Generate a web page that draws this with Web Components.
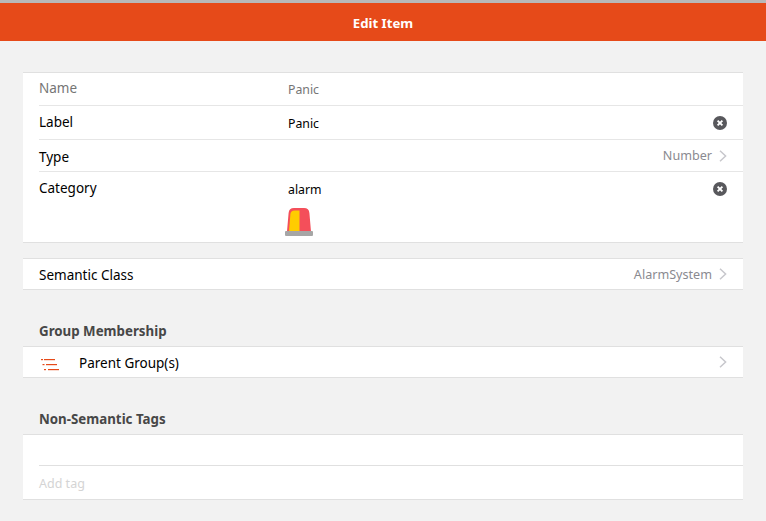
<!DOCTYPE html>
<html>
<head>
<meta charset="utf-8">
<style>
  html, body { margin: 0; padding: 0; }
  body { width: 766px; height: 521px; overflow: hidden; background: #f2f2f2; font: 13.5px "Noto Sans", sans-serif; color: #000; }
</style>
</head>
<body>
<edit-page>
  <nav-bar slot="bar">Edit Item</nav-bar>

  <list-card style="margin-top:31px">
    <list-row h="33" dim label="Name" value="Panic" inset style="--lab:-2px;--val:1px"></list-row>
    <list-row h="34" label="Label" value="Panic" clear inset style="--lab:-2px;--val:3px"></list-row>
    <list-row h="32" label="Type" after="Number" chevron inset style="--lab:2px"></list-row>
    <list-row h="70" top label="Category" value="alarm" clear style="--val:2px">
      <alarm-icon slot="extra"></alarm-icon>
    </list-row>
  </list-card>

  <list-card style="margin-top:15px">
    <list-row h="30" label="Semantic Class" after="AlarmSystem" chevron style="--lab:2px"></list-row>
  </list-card>

  <block-title style="height:56px">Group Membership</block-title>
  <list-card>
    <list-row h="30" label="Parent Group(s)" chevron style="--lab:2px">
      <list-icon slot="media"></list-icon>
    </list-row>
  </list-card>

  <block-title style="height:56px">Non-Semantic Tags</block-title>
  <list-card>
    <tag-input></tag-input>
  </list-card>
</edit-page>

<script>
class EditPage extends HTMLElement {
  constructor() {
    super();
    this.attachShadow({mode:'open'});
    this.shadowRoot.innerHTML = `
      <style>
        :host { display: block; border-top: 3px solid #b8b8b8; }
        main { display: flex; flex-direction: column; }
      </style>
      <slot name="bar"></slot>
      <main><slot></slot></main>`;
  }
}

class NavBar extends HTMLElement {
  constructor() {
    super();
    this.attachShadow({mode:'open'});
    this.shadowRoot.innerHTML = `
      <style>
        :host { display: flex; height: 38px; padding-top: 2px; box-sizing: border-box; align-items: center; justify-content: center;
                background: #e64a19; color: #fff; font-weight: 700; font-size: 13.2px; }
      </style>
      <slot></slot>`;
  }
}

class ListCard extends HTMLElement {
  constructor() {
    super();
    this.attachShadow({mode:'open'});
    this.shadowRoot.innerHTML = `
      <style>
        :host { display: block; margin: 0 23px; background: #fff;
                border-top: 1px solid #e0e0e0; border-bottom: 1px solid #e0e0e0; }
      </style>
      <slot></slot>`;
  }
}

class ListRow extends HTMLElement {
  constructor() {
    super();
    this.attachShadow({mode:'open'});
    const get = n => this.getAttribute(n);
    const has = n => this.hasAttribute(n);
    this.shadowRoot.innerHTML = `
      <style>
        :host { display: block; padding-left: 16px; color: #000; }
        .row { display: flex; box-sizing: border-box; height: ${get('h')}px; padding-right: 16px; align-items: center; }
        :host([inset]) .row { border-bottom: 1px solid #e6e6e6; }
        :host([top]) .row { align-items: flex-start; padding-top: 7px; }
        .label { width: 249px; flex: none; line-height: 18px; margin-top: var(--lab, 0); }
        :host([dim]) .label { color: #757575; }
        :host([dim]) .value { color: #757575; }
        .value { flex: 1; font-size: 12.3px; line-height: 18px; padding-top: var(--val, 0); }
        .after { margin-left: auto; color: #8a8a90; font-size: 12.6px; }
        .media { width: 40px; flex: none; display: flex; }
        .x { margin-left: auto; width: 14px; height: 14px; flex: none; }
        :host([top]) .x { margin-top: 3px; }
        .chev { width: 8px; height: 12px; flex: none; }
        svg { display: block; }
      </style>
      <div class="row">
        ${this.querySelector('[slot=media]') ? '<span class="media"><slot name="media"></slot></span>' : ''}
        <span class="label">${get('label')}</span>
        ${has('value') ? `<span class="value">${get('value')}<slot name="extra"></slot></span>` : ''}
        ${has('after') ? `<span class="after">${get('after')}</span>` : ''}
        ${has('clear') ? `<svg class="x" viewBox="0 0 14 14"><circle cx="7" cy="7" r="7" fill="#58585c"/><path d="M4.6 4.6l4.8 4.8M9.4 4.6l-4.8 4.8" stroke="#fff" stroke-width="1.9"/></svg>` : ''}
        ${has('chevron') ? `<svg class="chev" style="margin-left:${has('after') ? '7px' : 'auto'}" viewBox="0 0 8 12"><path d="M1 .8l5.6 5.2L1 11.2" fill="none" stroke="#c7c7cc" stroke-width="1.5"/></svg>` : ''}
      </div>`;
  }
}

class BlockTitle extends HTMLElement {
  constructor() {
    super();
    this.attachShadow({mode:'open'});
    this.shadowRoot.innerHTML = `
      <style>
        :host { display: flex; box-sizing: border-box; align-items: flex-end; padding: 0 0 6px 39px;
                font-weight: 700; font-size: 13.3px; color: #474747; }
      </style>
      <slot></slot>`;
  }
}

class AlarmIcon extends HTMLElement {
  constructor() {
    super();
    this.attachShadow({mode:'open'});
    this.shadowRoot.innerHTML = `
      <style>
        :host { display: block; width: 28px; height: 29px; margin: 8px 0 0 -3px; }
        svg { display: block; }
      </style>
      <svg width="28" height="29" viewBox="0 0 28 29">
        <path d="M2 24.5L3.6 6Q4 1 9 1H19Q24 1 24.4 6L26 24.5Z" fill="#f44f5a"/>
        <path d="M4 24.5L5.4 7Q5.8 3.5 9.5 3.5H14.5V24.5Z" fill="#ffcc00"/>
        <rect x="0" y="24" width="28" height="5" rx="1" fill="#a6a6a6"/>
      </svg>`;
  }
}

class ListIcon extends HTMLElement {
  constructor() {
    super();
    this.attachShadow({mode:'open'});
    this.shadowRoot.innerHTML = `
      <style>
        :host { display: block; width: 18px; height: 12px; margin: 6px 0 0 2px; }
        svg { display: block; }
      </style>
      <svg width="18" height="12" viewBox="0 0 18 12" fill="#e64a19">
        <rect x="0" y="0" width="2" height="1.2"/><rect x="3" y="0" width="11" height="1.2"/>
        <rect x="1.5" y="5" width="2" height="1.2"/><rect x="5" y="5" width="11" height="1.2"/>
        <rect x="3" y="10" width="2" height="1.2"/><rect x="7" y="10" width="11" height="1.2"/>
      </svg>`;
  }
}

class TagInput extends HTMLElement {
  constructor() {
    super();
    this.attachShadow({mode:'open'});
    this.shadowRoot.innerHTML = `
      <style>
        :host { display: block; padding-left: 16px; }
        .chips { height: 30px; border-bottom: 1px solid #e0e0e0; }
        .add { box-sizing: border-box; height: 33px; padding-top: 2px; display: flex; align-items: center; color: #d4d4d4; font-size: 12.5px; }
      </style>
      <div class="chips"></div>
      <div class="add">Add tag</div>`;
  }
}

customElements.define('edit-page', EditPage);
customElements.define('nav-bar', NavBar);
customElements.define('list-card', ListCard);
customElements.define('list-row', ListRow);
customElements.define('block-title', BlockTitle);
customElements.define('alarm-icon', AlarmIcon);
customElements.define('list-icon', ListIcon);
customElements.define('tag-input', TagInput);
</script>
</body>
</html>
